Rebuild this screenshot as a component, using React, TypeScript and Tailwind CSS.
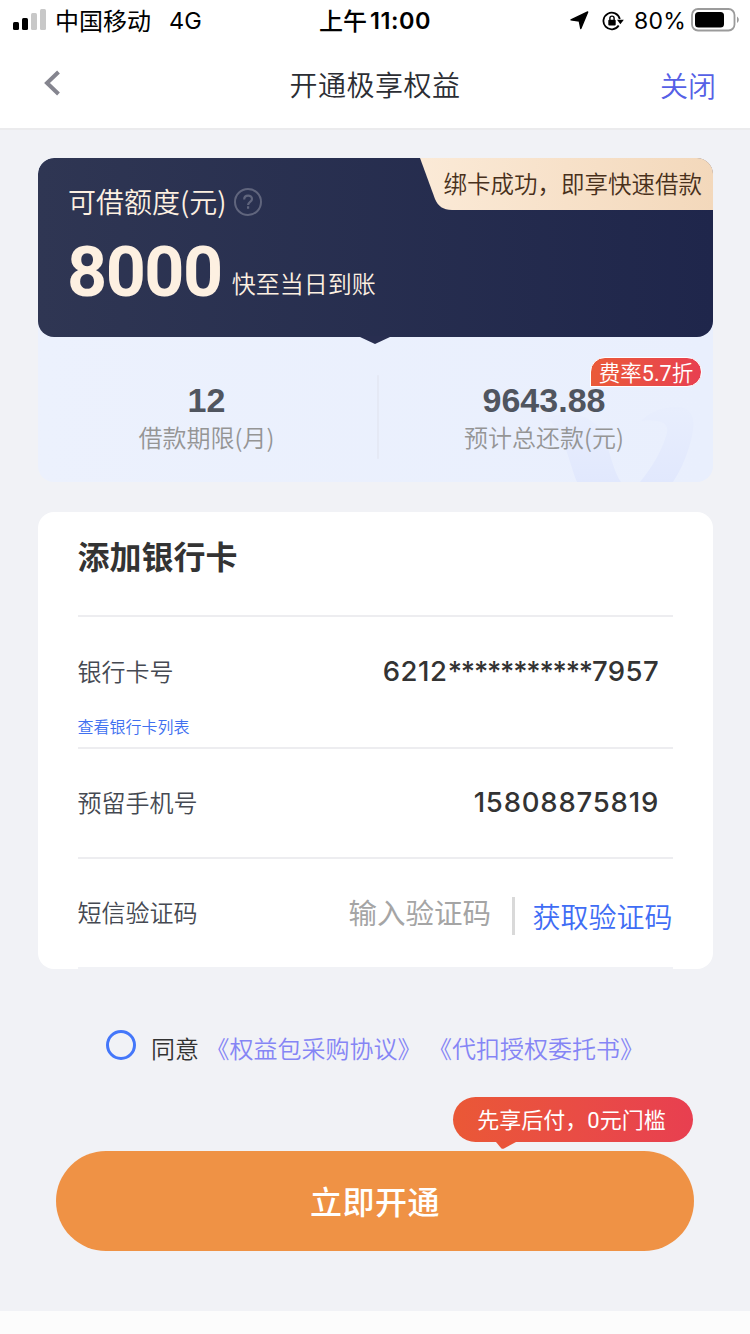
import { useState } from 'react';

const agreements = ['《权益包采购协议》', '《代扣授权委托书》'];

function StatusBar() {
  return (
    <div className="flex h-10 items-center text-[24px] leading-10 text-black">
      <div className="flex w-[250px] items-center pl-[13px]">
        <svg width="34" height="22" viewBox="0 0 34 22" className="shrink-0">
          <rect x="0" y="13" width="6" height="8" rx="1.5" />
          <rect x="9" y="9" width="6" height="12" rx="1.5" />
          <rect x="18" y="4" width="6" height="17" rx="1.5" fill="#c8c8c8" />
          <rect x="27" y="0" width="6" height="21" rx="1.5" fill="#c8c8c8" />
        </svg>
        <span className="ml-2 font-normal">中国移动</span>
        <span className="mt-px ml-[18px] font-['Inter','Noto_Sans_CJK_SC',sans-serif] text-[23.5px] font-normal">4G</span>
      </div>
      <div className="flex w-[250px] justify-center gap-[3px] font-medium">
        <span>上午</span>
        <span className="mt-px font-['Inter',sans-serif] text-[23.5px] font-semibold tracking-[0.5px]">11:00</span>
      </div>
      <div className="flex w-[250px] items-center justify-end pr-[11px]">
        <svg width="19" height="19" viewBox="0 0 19 19" className="mt-px mr-[13px]">
          <path d="M17.700 1 10.800 17.500 9.300 10 1 8.900Z" stroke="#000" strokeWidth="1.400" strokeLinejoin="round" />
        </svg>
        <svg width="23" height="20" viewBox="0 0 23 20" className="mt-px mr-[9px]">
          <path d="M16.700 14.600A8.300 8.300 0 1 1 17.800 8" fill="none" stroke="#000" strokeWidth="1.8" />
          <path d="M15 8.800h6.800l-3.400 4.400Z" />
          <rect x="6.3" y="8.800" width="7.4" height="5.600" rx="1" />
          <path d="M7.900 9V7.200a2.100 2.100 0 0 1 4.200 0V9" fill="none" stroke="#000" strokeWidth="1.4" />
        </svg>
        <span className="mt-px mr-[5px] font-['Inter',sans-serif] text-[23px] font-normal tracking-[0.2px]">80%</span>
        <svg width="48" height="24" viewBox="0 0 48 24">
          <rect x="1" y="1" width="42.5" height="21.5" rx="6" fill="none" stroke="#9b9b9b" strokeWidth="1.8" />
          <rect x="4" y="4" width="29" height="15.5" rx="3.5" />
          <path d="M46 8.500c2.400 1.600 2.400 5 0 6.600Z" fill="#9b9b9b" />
        </svg>
      </div>
    </div>
  );
}

function NavBar() {
  return (
    <header className="flex h-[90px] items-center border-b-2 border-[#ebebed] text-[28px]">
      <div className="w-[250px] pl-[43px]">
        <svg width="18" height="28" viewBox="0 0 18 28" className="mb-[2px]">
          <path d="M15.500 3 4 14l11.500 11" fill="none" stroke="#85858f" strokeWidth="4" />
        </svg>
      </div>
      <h1 className="w-[250px] pb-[1px] text-center tracking-[0.5px] text-[#2b2d33]">开通极享权益</h1>
      <button className="w-[250px] pt-[2px] pr-[34px] text-right text-[#5560e6]">关闭</button>
    </header>
  );
}

function LoanCard() {
  return (
    <section className="relative h-[324px] overflow-hidden rounded-2xl bg-linear-to-r from-[#ecf1fd] to-[#e9effd]">
      <div className="h-[179px] rounded-2xl bg-linear-to-r from-[#2f3653] to-[#1f264b] pt-[23px] pl-[30px] text-[#fdf0e1]">
        <div className="flex h-10 items-center text-[28px] leading-10">
          <span>可借额度(元)</span>
          <svg width="28" height="28" viewBox="0 0 28 28" className="mt-[2px] ml-[7px]" fill="none" stroke="#60657d" strokeWidth="2">
            <circle cx="14" cy="14" r="13" />
            <path d="M10.200 11.400c0-5 7.800-5 7.800-.4 0 2.900-3.900 2.900-3.900 6M14.100 18.300v2.400" strokeWidth="2.2" />
          </svg>
        </div>
        <div className="-ml-px flex items-start">
          <span className="pt-px font-['Roboto',sans-serif] text-[70px] leading-[100px] font-bold tracking-[-1.500px]">8000</span>
          <span className="mt-[44px] ml-[10px] text-[24px] leading-9">快至当日到账</span>
        </div>
      </div>

      {/* ribbon in the corner of the dark panel */}
      <svg width="293" height="52" viewBox="0 0 293 52" className="absolute top-0 right-0">
        <defs>
          <linearGradient id="ribbon">
            <stop stopColor="#fbead7" />
            <stop offset="1" stopColor="#f3d8bb" />
          </linearGradient>
        </defs>
        <path d="M0 0h293v52H32c-9 0-14-4-17-11Z" fill="url(#ribbon)" />
      </svg>
      <span className="absolute top-[7px] right-[11px] text-[23.500px] leading-9 text-[#48301b]">绑卡成功，即享快速借款</span>
      <svg width="30" height="8" viewBox="0 0 30 8" className="absolute top-[178px] left-[322px]">
        <path d="M0 0h30v1L15 8 0 1Z" fill="#282e50" />
      </svg>

      {/* watermark */}
      <svg width="174" height="76" viewBox="0 0 174 76" className="absolute right-0 bottom-0">
        <defs>
          <linearGradient id="mark" x1="0" y1="0" x2="0" y2="1">
            <stop stopColor="#e8eefd" />
            <stop offset="1" stopColor="#e1e8fd" />
          </linearGradient>
        </defs>
        <path d="M6 12c27-9 50-3 60 20 6 20 10 36 16 44H38C29 54 24 20 6 12Z" fill="url(#mark)" />
        <path d="M102 15c10-10 22-14 36-14 15 0 19 11 15 29-4 18-11 34-19 46h-33c14-17 22-32 27-49 2-10-6-14-26-12Z" fill="url(#mark)" />
      </svg>

      <div className="relative flex h-[145px] pt-[38px] text-center">
        <div className="w-[337px]">
          <p className="font-['Liberation_Sans',sans-serif] text-[34px] leading-[50px] font-bold text-[#50555f]">12</p>
          <p className="text-[24px] leading-6 text-[#959595]">借款期限(月)</p>
        </div>
        <div className="ml-[2px] h-[84px] w-[2px] rounded bg-[#e5e9f5]" />
        <div className="w-[330px]">
          <p className="font-['Liberation_Sans',sans-serif] text-[34px] leading-[50px] font-bold text-[#50555f]">9643.88</p>
          <p className="text-[24px] leading-6 text-[#959595]">预计总还款(元)</p>
        </div>
        <span className="absolute top-[20px] right-[11px] h-[30px] w-[112px] rounded-[15px] rounded-bl-none border border-white bg-linear-to-r from-[#ea5a38] to-[#e83f50] text-[21.500px] leading-[28px] text-white">
          费率<span className="font-['Roboto',sans-serif] font-normal">5.7</span>折
        </span>
      </div>
    </section>
  );
}

function BankForm() {
  const [code, setCode] = useState('');

  return (
    <section className="mt-[30px] h-[457px] rounded-2xl bg-white pr-10 pl-[39.500px] text-[24px] text-[#454952]">
      <h2 className="h-[105px] border-b-2 border-[#ededf0] pt-[19px] text-[32px] leading-[48px] font-bold text-[#333]">添加银行卡</h2>

      <div className="h-[132px] border-b-2 border-[#ededf0] pt-[34px]">
        <div className="flex h-10 items-center justify-between pr-[14px]">
          <span>银行卡号</span>
          <span className="flex pt-px font-['Inter',sans-serif] text-[27.500px] font-medium text-[#333]">
            <span className="tracking-[0.600px]">6212</span>
            <span className="tracking-[-1.200px]">***********</span>
            <span className="tracking-[0.400px]">7957</span>
          </span>
        </div>
        <a className="mt-[23px] block text-[16px] leading-6 text-[#4070f0]">查看银行卡列表</a>
      </div>

      <div className="flex h-[110px] items-center justify-between border-b-2 border-[#ededf0] pr-[14px]">
        <span className="pb-[2px]">预留手机号</span>
        <span className="font-['Inter',sans-serif] text-[27.500px] font-medium tracking-[0.800px] text-[#333]">15808875819</span>
      </div>

      <div className="flex h-[110px] items-center border-b-2 border-[#f1f2f6]">
        <span className="pb-[2px]">短信验证码</span>
        <input
          value={code}
          onChange={(e) => setCode(e.target.value)}
          placeholder="输入验证码"
          className="mb-1 ml-[151px] h-12 w-[163px] text-[28.500px] font-normal outline-none placeholder:text-[#a5a5a5]"
        />
        <span className="mt-[5px] h-[38px] w-[3px] bg-[#d9d9d9]" />
        <button className="mt-[5px] ml-[18px] text-[28px] whitespace-nowrap text-[#3f6df5]">获取验证码</button>
      </div>
    </section>
  );
}

export default function App() {
  const [agreed, setAgreed] = useState(false);

  return (
    <main className="flex h-[1334px] w-[750px] flex-col overflow-hidden bg-[#fcfcfc] font-['Noto_Sans_CJK_SC',sans-serif] font-[350]">
      <div className="bg-white">
        <StatusBar />
        <NavBar />
      </div>

      <div className="h-[1181px] bg-[#f1f2f6] pt-[28px] pr-[37px] pl-[38px]">
        <LoanCard />
        <BankForm />

        <div className="mt-[59px] flex h-10 items-center pl-[68px] text-[24px]">
          <button
            onClick={() => setAgreed(!agreed)}
            className={`mb-[7px] size-[30px] rounded-full border-[3px] border-[#4477fa] ${agreed ? 'bg-[#4477fa]' : 'bg-transparent'}`}
          />
          <span className="ml-[15px] text-[#333]">同意</span>
          {agreements.map((name) => (
            <a key={name} className="ml-[6.500px] text-[#8585f5]">{name}</a>
          ))}
        </div>

        <div className="relative mt-[83px] pr-[19px] pl-[18px]">
          <button className="h-[100px] w-full rounded-full bg-[#ef9245] pb-[2px] text-[32px] font-medium tracking-[0.500px] text-white">立即开通</button>
          <div className="absolute -top-[54px] right-[20px] h-[45px] w-[240px] rounded-full bg-linear-to-r from-[#ea5836] to-[#e83f50] pr-[3px] text-center text-[22px] leading-[43px] font-normal text-white">
            先享后付，<span className="font-['Roboto',sans-serif]">0</span>元门槛
            <svg width="20" height="8" viewBox="0 0 20 8" className="absolute top-[44px] left-[43px]">
              <path d="M0 0h20v1L8 7.500c-1 .5-2 .5-3-.5L0 1Z" fill="#ea5339" />
            </svg>
          </div>
        </div>
      </div>
    </main>
  );
}
